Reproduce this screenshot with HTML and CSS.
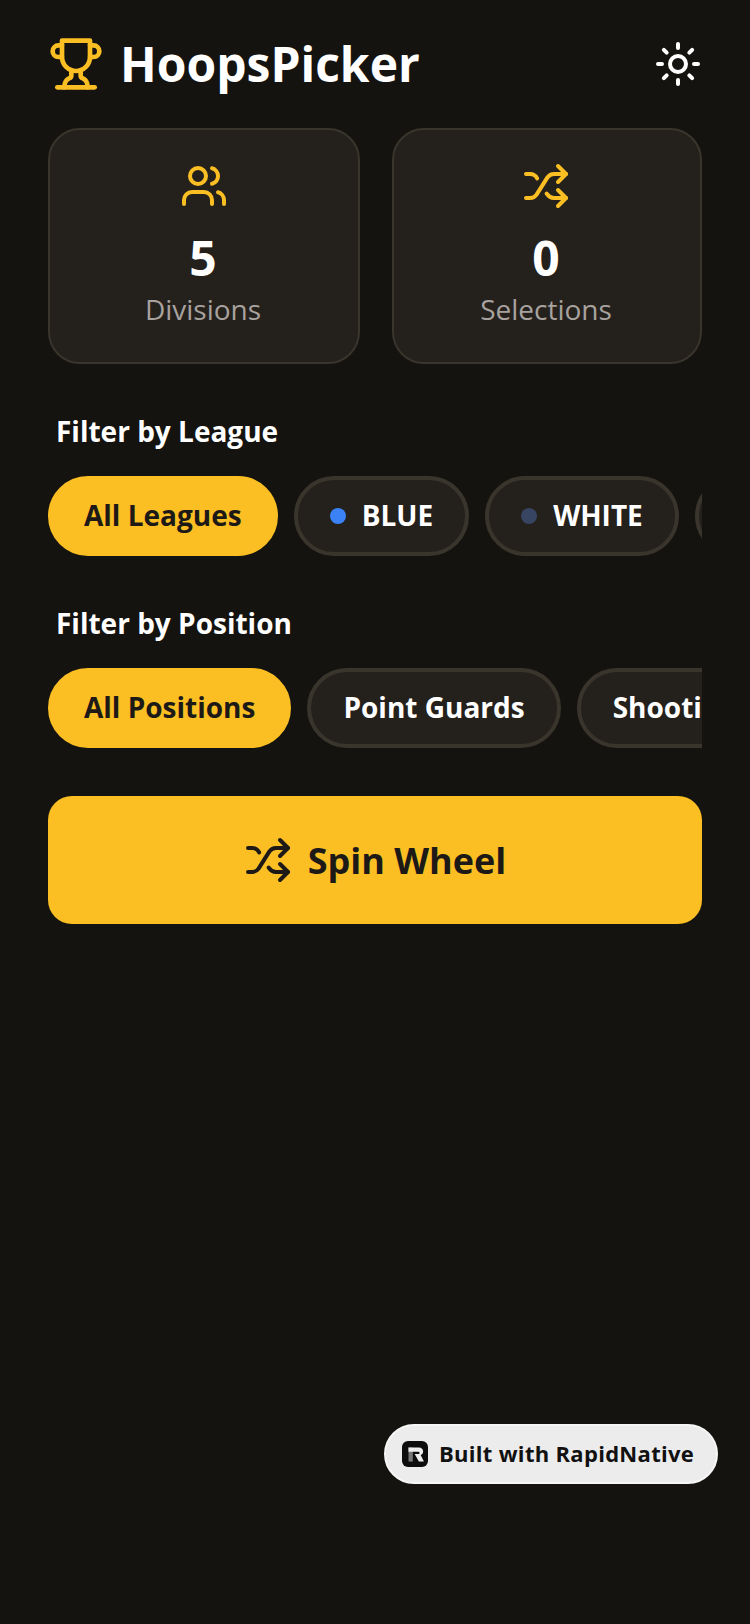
FILE: index.html
```html
<!DOCTYPE html>
<html lang="en">
<head>
<meta charset="utf-8">
<title>HoopsPicker</title>
<link rel="stylesheet" href="styles.css">
</head>
<body>
<main class="screen">
  <header class="header">
    <div class="brand">
      <svg class="icon-trophy" viewBox="0 0 24 24"><path d="M6 9H4.5a2.5 2.5 0 0 1 0-5H6"/><path d="M18 9h1.5a2.5 2.5 0 0 0 0-5H18"/><path d="M4 22h16"/><path d="M10 14.66V17c0 .55-.47.98-.97 1.21C7.85 18.75 7 20.24 7 22"/><path d="M14 14.66V17c0 .55.47.98.97 1.21C16.15 18.75 17 20.24 17 22"/><path d="M18 2H6v7a6 6 0 0 0 12 0V2Z"/></svg>
      <h1 class="title">HoopsPicker</h1>
    </div>
    <svg class="icon-sun" viewBox="0 0 24 24"><circle cx="12" cy="12" r="4"/><path d="M12 2v2"/><path d="M12 20v2"/><path d="m4.93 4.93 1.41 1.41"/><path d="m17.66 17.66 1.41 1.41"/><path d="M2 12h2"/><path d="M20 12h2"/><path d="m6.34 17.66-1.41 1.41"/><path d="m19.07 4.93-1.41 1.41"/></svg>
  </header>

  <section class="stats">
    <div class="card card-wide">
      <svg class="icon-card" viewBox="0 0 24 24"><path d="M16 21v-2a4 4 0 0 0-4-4H6a4 4 0 0 0-4 4v2"/><circle cx="9" cy="7" r="4"/><path d="M22 21v-2a4 4 0 0 0-3-3.87"/><path d="M16 3.13a4 4 0 0 1 0 7.75"/></svg>
      <div class="stat-value">5</div>
      <div class="stat-label">Divisions</div>
    </div>
    <div class="card">
      <svg class="icon-card" viewBox="0 0 24 24"><path d="m18 14 4 4-4 4"/><path d="m18 2 4 4-4 4"/><path d="M2 18h1.973a4 4 0 0 0 3.3-1.7l5.454-8.6a4 4 0 0 1 3.3-1.7H22"/><path d="M2 6h1.972a4 4 0 0 1 3.6 2.2"/><path d="M22 18h-6.041a4 4 0 0 1-3.3-1.8l-.359-.45"/></svg>
      <div class="stat-value">0</div>
      <div class="stat-label">Selections</div>
    </div>
  </section>

  <section class="filter filter-league">
    <h2 class="filter-title">Filter by League</h2>
    <div class="pills">
      <div class="pill pill-active">All Leagues</div>
      <div class="pill"><span class="dot dot-blue"></span>BLUE</div>
      <div class="pill"><span class="dot dot-white"></span>WHITE</div>
      <div class="pill"><span class="dot dot-gold"></span>GOLD</div>
    </div>
  </section>

  <section class="filter filter-position">
    <h2 class="filter-title">Filter by Position</h2>
    <div class="pills">
      <div class="pill pill-active">All Positions</div>
      <div class="pill">Point Guards</div>
      <div class="pill">Shooting Guards</div>
    </div>
  </section>

  <button class="spin" type="button">
    <svg class="icon-spin" viewBox="0 0 24 24"><path d="m18 14 4 4-4 4"/><path d="m18 2 4 4-4 4"/><path d="M2 18h1.973a4 4 0 0 0 3.3-1.7l5.454-8.6a4 4 0 0 1 3.3-1.7H22"/><path d="M2 6h1.972a4 4 0 0 1 3.6 2.2"/><path d="M22 18h-6.041a4 4 0 0 1-3.3-1.8l-.359-.45"/></svg>
    <span>Spin Wheel</span>
  </button>

  <div class="badge">
    <span class="badge-logo"><svg viewBox="0 0 24 24"><path class="badge-stem" d="M6 6h4v13H6z"/><path class="badge-r" d="M6 6h9.5c2.6 0 4 1.6 4 3.6 0 1.6-.9 2.8-2.3 3.3l3 6.1h-4.6l-3.9-7h3.5c.6 0 1-.4 1-1s-.4-1-1-1H6z"/></svg></span>
    <span>Built with RapidNative</span>
  </div>
</main>
</body>
</html>
```

FILE: styles.css
```css
* { box-sizing: border-box; }
html, body { margin: 0; padding: 0; }
body {
  background: #14130f;
  font-family: "Open Sans", "Liberation Sans", sans-serif;
  color: #fff;
}
.screen {
  position: relative;
  width: 750px;
  height: 1624px;
  padding: 32px 48px 0;
  overflow: hidden;
}
.header {
  display: flex;
  align-items: center;
  justify-content: space-between;
  height: 64px;
}
.brand { display: flex; align-items: center; gap: 16px; }
.title { margin: 0; font-size: 48px; line-height: 64px; font-weight: 700; }
svg { fill: none; stroke-linecap: round; stroke-linejoin: round; stroke-width: 2; display: block; flex: none; }
.icon-trophy { width: 56px; height: 56px; stroke: #fbbf24; }
.icon-sun { width: 48px; height: 48px; stroke: #fff; }
.stats { display: flex; gap: 32px; margin-top: 32px; }
.card {
  flex: 0 0 310px;
  height: 236px;
  padding: 32px 2px 0 0;
  background: #24201c;
  border: 2px solid #3a352c;
  border-radius: 32px;
  display: flex;
  flex-direction: column;
  align-items: center;
}
.card-wide { flex-basis: 312px; }
.card-wide .icon-card { margin-left: 2px; }
.icon-card { width: 48px; height: 48px; stroke: #fbbf24; }
.stat-value { margin-top: 16px; font-size: 48px; line-height: 64px; font-weight: 700; }
.stat-label { margin-top: 1px; font-size: 28px; line-height: 36px; color: #a8a29e; }
.filter-league { margin-top: 47px; }
.filter-position { margin-top: 47px; }
.filter-title { margin: 0 0 25px 8px; font-size: 28px; line-height: 40px; font-weight: 700; }
.pills { display: flex; gap: 16px; overflow: hidden; }
.pill {
  flex: none;
  height: 80px;
  padding: 0 32px 2px;
  display: flex;
  align-items: center;
  gap: 16px;
  background: #24201c;
  border: 4px solid #3a352c;
  border-radius: 40px;
  font-size: 28px;
  font-weight: 700;
}
.pill-active { background: #fbbf24; border-color: #fbbf24; color: #1c1917; }
.dot { width: 16px; height: 16px; border-radius: 50%; margin-top: 2px; }
.dot-blue { background: #3b82f6; }
.dot-white { background: #374462; }
.dot-gold { background: #fbbf24; }
.spin {
  display: flex;
  align-items: center;
  justify-content: center;
  gap: 16px;
  width: 100%;
  height: 128px;
  margin-top: 48px;
  border: 0;
  border-radius: 24px;
  background: #fbbf24;
  color: #1c1917;
  font-family: inherit;
  font-size: 36px;
  font-weight: 700;
}
.icon-spin { width: 48px; height: 48px; stroke: #1c1917; }
.badge {
  position: absolute;
  left: 384px;
  top: 1424px;
  width: 334px;
  height: 60px;
  padding: 0 0 2px 16px;
  display: flex;
  align-items: center;
  gap: 11px;
  background: #ececec;
  border: 2px solid #f6f6f6;
  border-radius: 30px;
  color: #111;
  font-size: 22px;
  letter-spacing: 0.3px;
  font-weight: 700;
}
.badge-logo {
  width: 26px;
  height: 26px;
  margin-top: 2px;
  background: #0d0d0d;
  border-radius: 6px;
  display: flex;
}
.badge-logo svg { width: 26px; height: 26px; }
.badge-r { fill: #eee; stroke: none; }
.badge-stem { fill: #777; stroke: none; }
```
